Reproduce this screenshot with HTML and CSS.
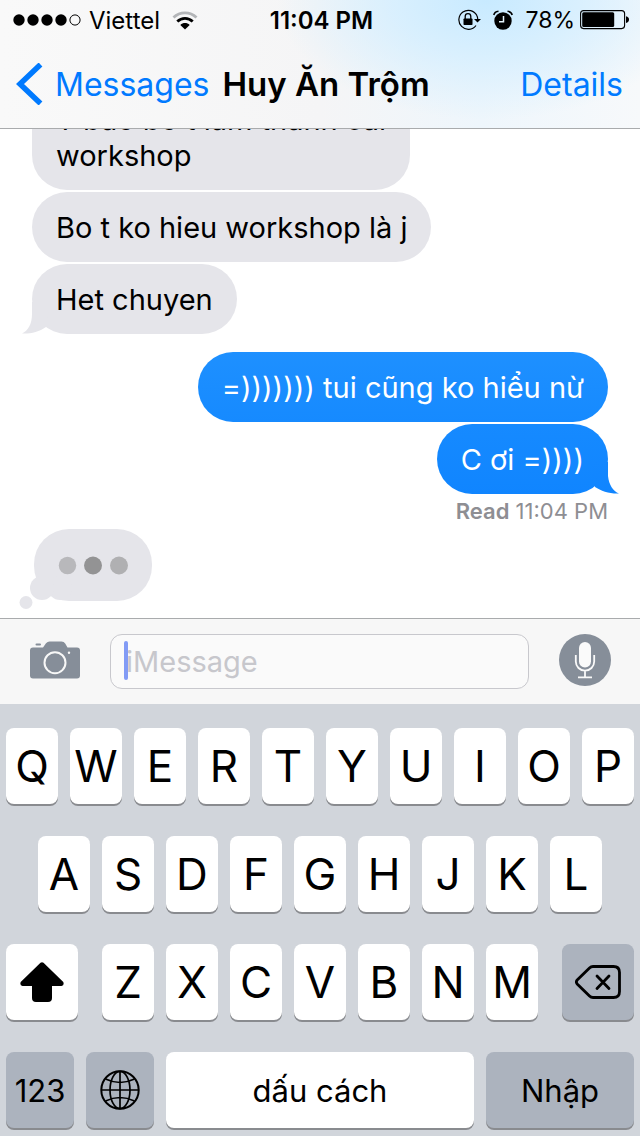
FILE: index.html
```html
<!DOCTYPE html>
<html lang="vi">
<head>
<meta charset="utf-8">
<meta name="viewport" content="width=device-width, initial-scale=1">
<title>Messages</title>
<link rel="stylesheet" href="styles.css">
</head>
<body>
<div class="phone">
  <header class="header">
    <div class="status">
      <div class="status-left">
        <svg class="signal" width="68" height="12" viewBox="0 0 68 12" aria-hidden="true">
          <circle cx="6" cy="6" r="5.7"/><circle cx="20" cy="6" r="5.7"/><circle cx="34" cy="6" r="5.7"/><circle cx="48" cy="6" r="5.7"/>
          <circle cx="62" cy="6" r="5.1" fill="none" stroke="#000"/>
        </svg>
        <span>Viettel</span>
        <svg class="wifi" width="26" height="19" viewBox="0 0 26 19" fill="none" aria-hidden="true">
          <path d="M1.500 6.600C8 .4 18 .4 24.500 6.600" stroke="#b3b5b8" stroke-width="2.800"/>
          <path d="M5.300 10.600C9.700 6.400 16.300 6.400 20.700 10.600" stroke="#000" stroke-width="2.800"/>
          <path d="M8.300 14C11 11.400 15 11.400 17.700 14L13 18.500Z" fill="#000"/>
        </svg>
      </div>
      <time class="clock">11:04 PM</time>
      <div class="status-right">
        <svg width="24" height="22" viewBox="0 0 24 22" fill="none" aria-hidden="true">
          <path d="M19.900 6.600A9.500 9.500 0 1 0 19 16.500M19.700 6.200Q21 8.500 20.600 11" stroke="#000" stroke-width="1.200"/>
          <path d="M17 10H24L20.500 13.500Z" fill="#000"/>
          <rect x="6.500" y="9.500" width="9" height="6.500" rx=".8" fill="#000"/>
          <path d="M8.200 10V7.500a2.800 2.800 0 0 1 5.600 0V10" stroke="#000" stroke-width="1.300"/>
        </svg>
        <svg class="alarm" width="20" height="20" viewBox="0 0 20 20" fill="none" aria-hidden="true">
          <circle cx="10" cy="11" r="8.700" fill="#000"/>
          <path d="M.8 5Q1.500 1.800 5.500 1.300M19.200 5Q18.500 1.800 14.500 1.300" stroke="#000" stroke-width="1.600"/>
          <path d="M10.500 6V11.800H6" stroke="#e6f5fe" stroke-width="1.500"/>
        </svg>
        <span>78%</span>
        <svg class="battery" width="50" height="20" viewBox="0 0 50 20" aria-hidden="true">
          <rect x=".6" y=".6" width="44" height="18" rx="3" fill="none" stroke="#000" stroke-width="1.100"/>
          <rect x="2.200" y="2.200" width="32" height="14.800" rx="1.500"/>
          <path d="M46 6.300Q49 7 49 9.600T46 13Z"/>
        </svg>
      </div>
    </div>
    <nav class="nav">
      <button class="back" type="button">
        <svg width="28" height="42" viewBox="0 0 28 42" fill="none" aria-hidden="true"><path d="M25.500 1.500 5 21 25.500 40.500" stroke="#007aff" stroke-width="5.500"/></svg>
        <span>Messages</span>
      </button>
      <h1 class="title">Huy Ăn Trộm</h1>
      <button class="details" type="button">Details</button>
    </nav>
  </header>

  <main class="thread">
    <p class="bubble received">T bao bo t lam thanh cai<br>workshop</p>
    <p class="bubble received">Bo t ko hieu workshop là j</p>
    <p class="bubble received">Het chuyen
      <svg class="tail tail-left" width="28" height="32" viewBox="0 0 28 32" aria-hidden="true"><path d="M10 0V12C10 22 6 29 0 31.500C8 32 17 30 24 25L28 0Z" fill="#e5e5ea"/></svg>
    </p>
    <p class="bubble sent first">=))))))) tui cũng ko hiểu nừ</p>
    <p class="bubble sent last">C ơi =))))
      <svg class="tail tail-right" width="28" height="32" viewBox="0 0 28 32" aria-hidden="true">
        <defs><linearGradient id="tail-fill" x1="0" y1="0" x2="0" y2="1"><stop stop-color="#1387ff"/><stop offset="1" stop-color="#1085ff"/></linearGradient></defs>
        <path d="M17 0V14C18 23 22 29 28 31.500C19 32 10 29 4 25L0 0Z" fill="url(#tail-fill)"/>
      </svg>
    </p>
    <p class="receipt"><strong>Read</strong> 11:04 PM</p>
    <svg class="typing" width="134" height="80" viewBox="0 0 134 80" role="img" aria-label="Typing">
      <g fill="#e5e5ea"><rect x="16" width="118" height="72" rx="35"/><circle cx="42" cy="59" r="12"/><circle cx="24" cy="59" r="12"/><circle cx="8" cy="73.500" r="6.500"/></g>
      <circle cx="49.500" cy="36.500" r="8.700" fill="#b8b8bb"/><circle cx="75" cy="36.500" r="9" fill="#939394"/><circle cx="101" cy="36.500" r="9" fill="#b0b0b2"/>
    </svg>
  </main>

  <form class="composer">
    <button class="icon-button" type="button" aria-label="Camera">
      <svg width="50" height="38" viewBox="0 0 50 38" fill="none" aria-hidden="true">
        <path d="M3 6.500H13L16 2.300Q17.500.5 19.500.5H31.500Q34 .5 35.200 2.500L37.500 6.500H47Q50 6.500 50 9.500V34.500Q50 37.500 47 37.500H3Q0 37.500 0 34.500V9.500Q0 6.500 3 6.500Z" fill="#868e99"/>
        <rect x="5.500" y="2.500" width="5.500" height="2" rx="1" fill="#868e99"/>
        <circle cx="25" cy="21.700" r="10.500" stroke="#f8f8f8" stroke-width="2"/><circle cx="39" cy="11.700" r="1.200" fill="#f8f8f8"/>
      </svg>
    </button>
    <div class="field">
      <input class="input" type="text" placeholder="iMessage" aria-label="iMessage">
      <span class="caret"></span>
    </div>
    <button class="icon-button" type="button" aria-label="Dictate">
      <svg width="52" height="52" viewBox="0 0 52 52" fill="none" aria-hidden="true">
        <circle cx="26" cy="26" r="26" fill="#868e99"/>
        <rect x="20" y="8" width="12" height="25.500" rx="6" fill="#fafafa"/>
        <path d="M16.800 21V27.500a9.200 9.200 0 0 0 18.400 0V21M26 37V43M19 43.300H33" stroke="#fafafa" stroke-width="1.800"/>
      </svg>
    </button>
  </form>

  <section class="keyboard" aria-label="Keyboard">
    <div class="row">
      <button class="key">Q</button><button class="key">W</button><button class="key">E</button><button class="key">R</button><button class="key">T</button><button class="key">Y</button><button class="key">U</button><button class="key">I</button><button class="key">O</button><button class="key">P</button>
    </div>
    <div class="row inset">
      <button class="key">A</button><button class="key">S</button><button class="key">D</button><button class="key">F</button><button class="key">G</button><button class="key">H</button><button class="key">J</button><button class="key">K</button><button class="key">L</button>
    </div>
    <div class="row">
      <button class="key shift" aria-label="Shift">
        <svg width="44" height="40" viewBox="0 0 44 40" aria-hidden="true"><path d="M20.500.8Q22-.5 23.500.8L43.300 20Q44.500 23.500 41.500 24H32V36Q32 40 28 40H16Q12 40 12 36V24H2.500Q-.5 23.500.7 20Z"/></svg>
      </button>
      <button class="key">Z</button><button class="key">X</button><button class="key">C</button><button class="key">V</button><button class="key">B</button><button class="key">N</button><button class="key">M</button>
      <button class="key dark delete" aria-label="Delete">
        <svg width="46" height="34" viewBox="0 0 46 34" fill="none" stroke="#000" aria-hidden="true"><path d="M18 1.500H38.500Q44.500 1.500 44.500 7.500V26.500Q44.500 32.500 38.500 32.500H18Q16 32.500 14.500 31L2.200 19Q.5 17 2.200 15L14.500 3Q16 1.500 18 1.500Z" stroke-width="2.800"/><path d="M22 11 34 23.500M34 11 22 23.500" stroke-width="2.800" stroke-linecap="round"/></svg>
      </button>
    </div>
    <div class="row">
      <button class="key dark mode">123</button>
      <button class="key dark mode" aria-label="Next keyboard">
        <svg width="40" height="40" viewBox="0 0 40 40" fill="none" stroke="#000" stroke-width="1.700" aria-hidden="true"><circle cx="20" cy="20" r="18.700" stroke-width="2"/><ellipse cx="20" cy="20" rx="10" ry="18.700"/><path d="M20 1V39M1 20H39M5.500 9Q20 16 34.500 9M5.500 31Q20 24 34.500 31"/></svg>
      </button>
      <button class="key space">dấu cách</button>
      <button class="key dark enter">Nhập</button>
    </div>
  </section>
</div>
</body>
</html>
```
FILE: styles.css
```css
* { box-sizing: border-box; }

body {
  margin: 0;
  background: #fff;
  color: #000;
  font-family: Inter, "Noto Sans", sans-serif;
}

button {
  padding: 0;
  border: 0;
  background: none;
  color: inherit;
  font: inherit;
}

svg { display: block; flex: none; }

.phone {
  display: flex;
  flex-direction: column;
  height: 100vh;
}

/* Status and navigation bars */
.header {
  flex: none;
  border-bottom: 1px solid #a9abad;
  background:
    radial-gradient(ellipse 210px 120px at 76% 0, #c8eaff 0, #d3eeffcc 45%, #e6f4fe00 100%),
    linear-gradient(90deg, #f9f9f9 0, #f5f5f6 50%, #eef6fc 75%, #f7f9fb 100%);
}

.status {
  display: grid;
  grid-template-columns: 1fr auto 1fr;
  align-items: center;
  height: 40px;
  padding: 0 10px 0 13px;
  font-size: 24px;
}

.status-left,
.status-right { display: flex; align-items: center; }
.status-right { justify-content: flex-end; font-size: 23px; }
.signal { margin-right: 8px; }
.wifi { margin-left: 12px; }
.alarm { margin: 0 12px; }
.battery { margin-left: 5px; }
.clock { font-weight: 600; }

.nav {
  display: grid;
  grid-template-columns: auto 1fr auto;
  align-items: center;
  height: 88px;
  padding: 0 17px 0 15px;
  font-size: 32px;
}

.back {
  display: flex;
  align-items: center;
  gap: 12px;
  color: #007aff;
}

.title {
  margin: 0 0 0 13px;
  font-size: 33px;
  font-weight: 600;
  white-space: nowrap;
}

.details { color: #007aff; }

/* Conversation */
.thread {
  display: flex;
  flex: 1;
  flex-direction: column;
  align-items: flex-start;
  justify-content: flex-end;
  gap: 2px;
  min-height: 0;
  padding: 0 32px 9px;
  overflow: hidden;
}

.bubble {
  position: relative;
  flex: none;
  margin: 0;
  padding: 18px 24px 16px;
  border-radius: 35px;
  font-size: 29px;
  line-height: 36px;
}

.received { background: #e5e5ea; }
.sent { align-self: flex-end; color: #fff; }
.first { margin-top: 16px; background: linear-gradient(#1e90ff, #168aff); }
.last { background: linear-gradient(#168aff, #1085ff); }

.tail { position: absolute; bottom: 0; }
.tail-left { left: -10px; }
.tail-right { right: -11px; }

.receipt {
  align-self: flex-end;
  margin: 0;
  color: #8e8e93;
  font-size: 22px;
  line-height: 31px;
}
.receipt strong { font-weight: 600; }

.typing { margin-left: -14px; }

/* Message entry */
.composer {
  display: flex;
  flex: none;
  align-items: flex-start;
  gap: 30px;
  height: 86px;
  padding: 15px 29px 0 30px;
  border-top: 1px solid #a9abad;
  background: #f7f7f7;
}

.icon-button {
  display: flex;
  align-items: center;
  height: 52px;
}

.field { position: relative; flex: 1; }

.input {
  display: block;
  width: 100%;
  height: 55px;
  padding: 0 15px;
  border: 1px solid #c8c8cd;
  border-radius: 12px;
  outline: 0;
  background: #fafafa;
  color: #000;
  font: 29px Inter, "Noto Sans", sans-serif;
}
.input::placeholder { color: #c7c7cc; opacity: 1; }

.caret {
  position: absolute;
  top: 7px;
  left: 14px;
  width: 4px;
  height: 39px;
  border-radius: 2px;
  background: #829bf5;
}

/* Keyboard */
.keyboard {
  display: flex;
  flex: none;
  flex-direction: column;
  gap: 32px;
  padding: 24px 6px 8px;
  background: #d1d5db;
}

.row { display: flex; gap: 12px; }
.inset { padding: 0 32px; }

.key {
  display: flex;
  flex: 52 1 0;
  align-items: center;
  justify-content: center;
  min-width: 0;
  height: 76px;
  border-radius: 8px;
  background: #fff;
  box-shadow: 0 2px 0 #898b8f;
  font-size: 44px;
}

.dark { background: #acb3be; }
.shift { flex-grow: 72; margin-right: 12px; }
.delete { flex-grow: 72; margin-left: 12px; }
.mode { flex-grow: 68; font-size: 31px; }
.space { flex-grow: 308; font-size: 31px; }
.enter { flex-grow: 148; font-size: 31px; }
```
